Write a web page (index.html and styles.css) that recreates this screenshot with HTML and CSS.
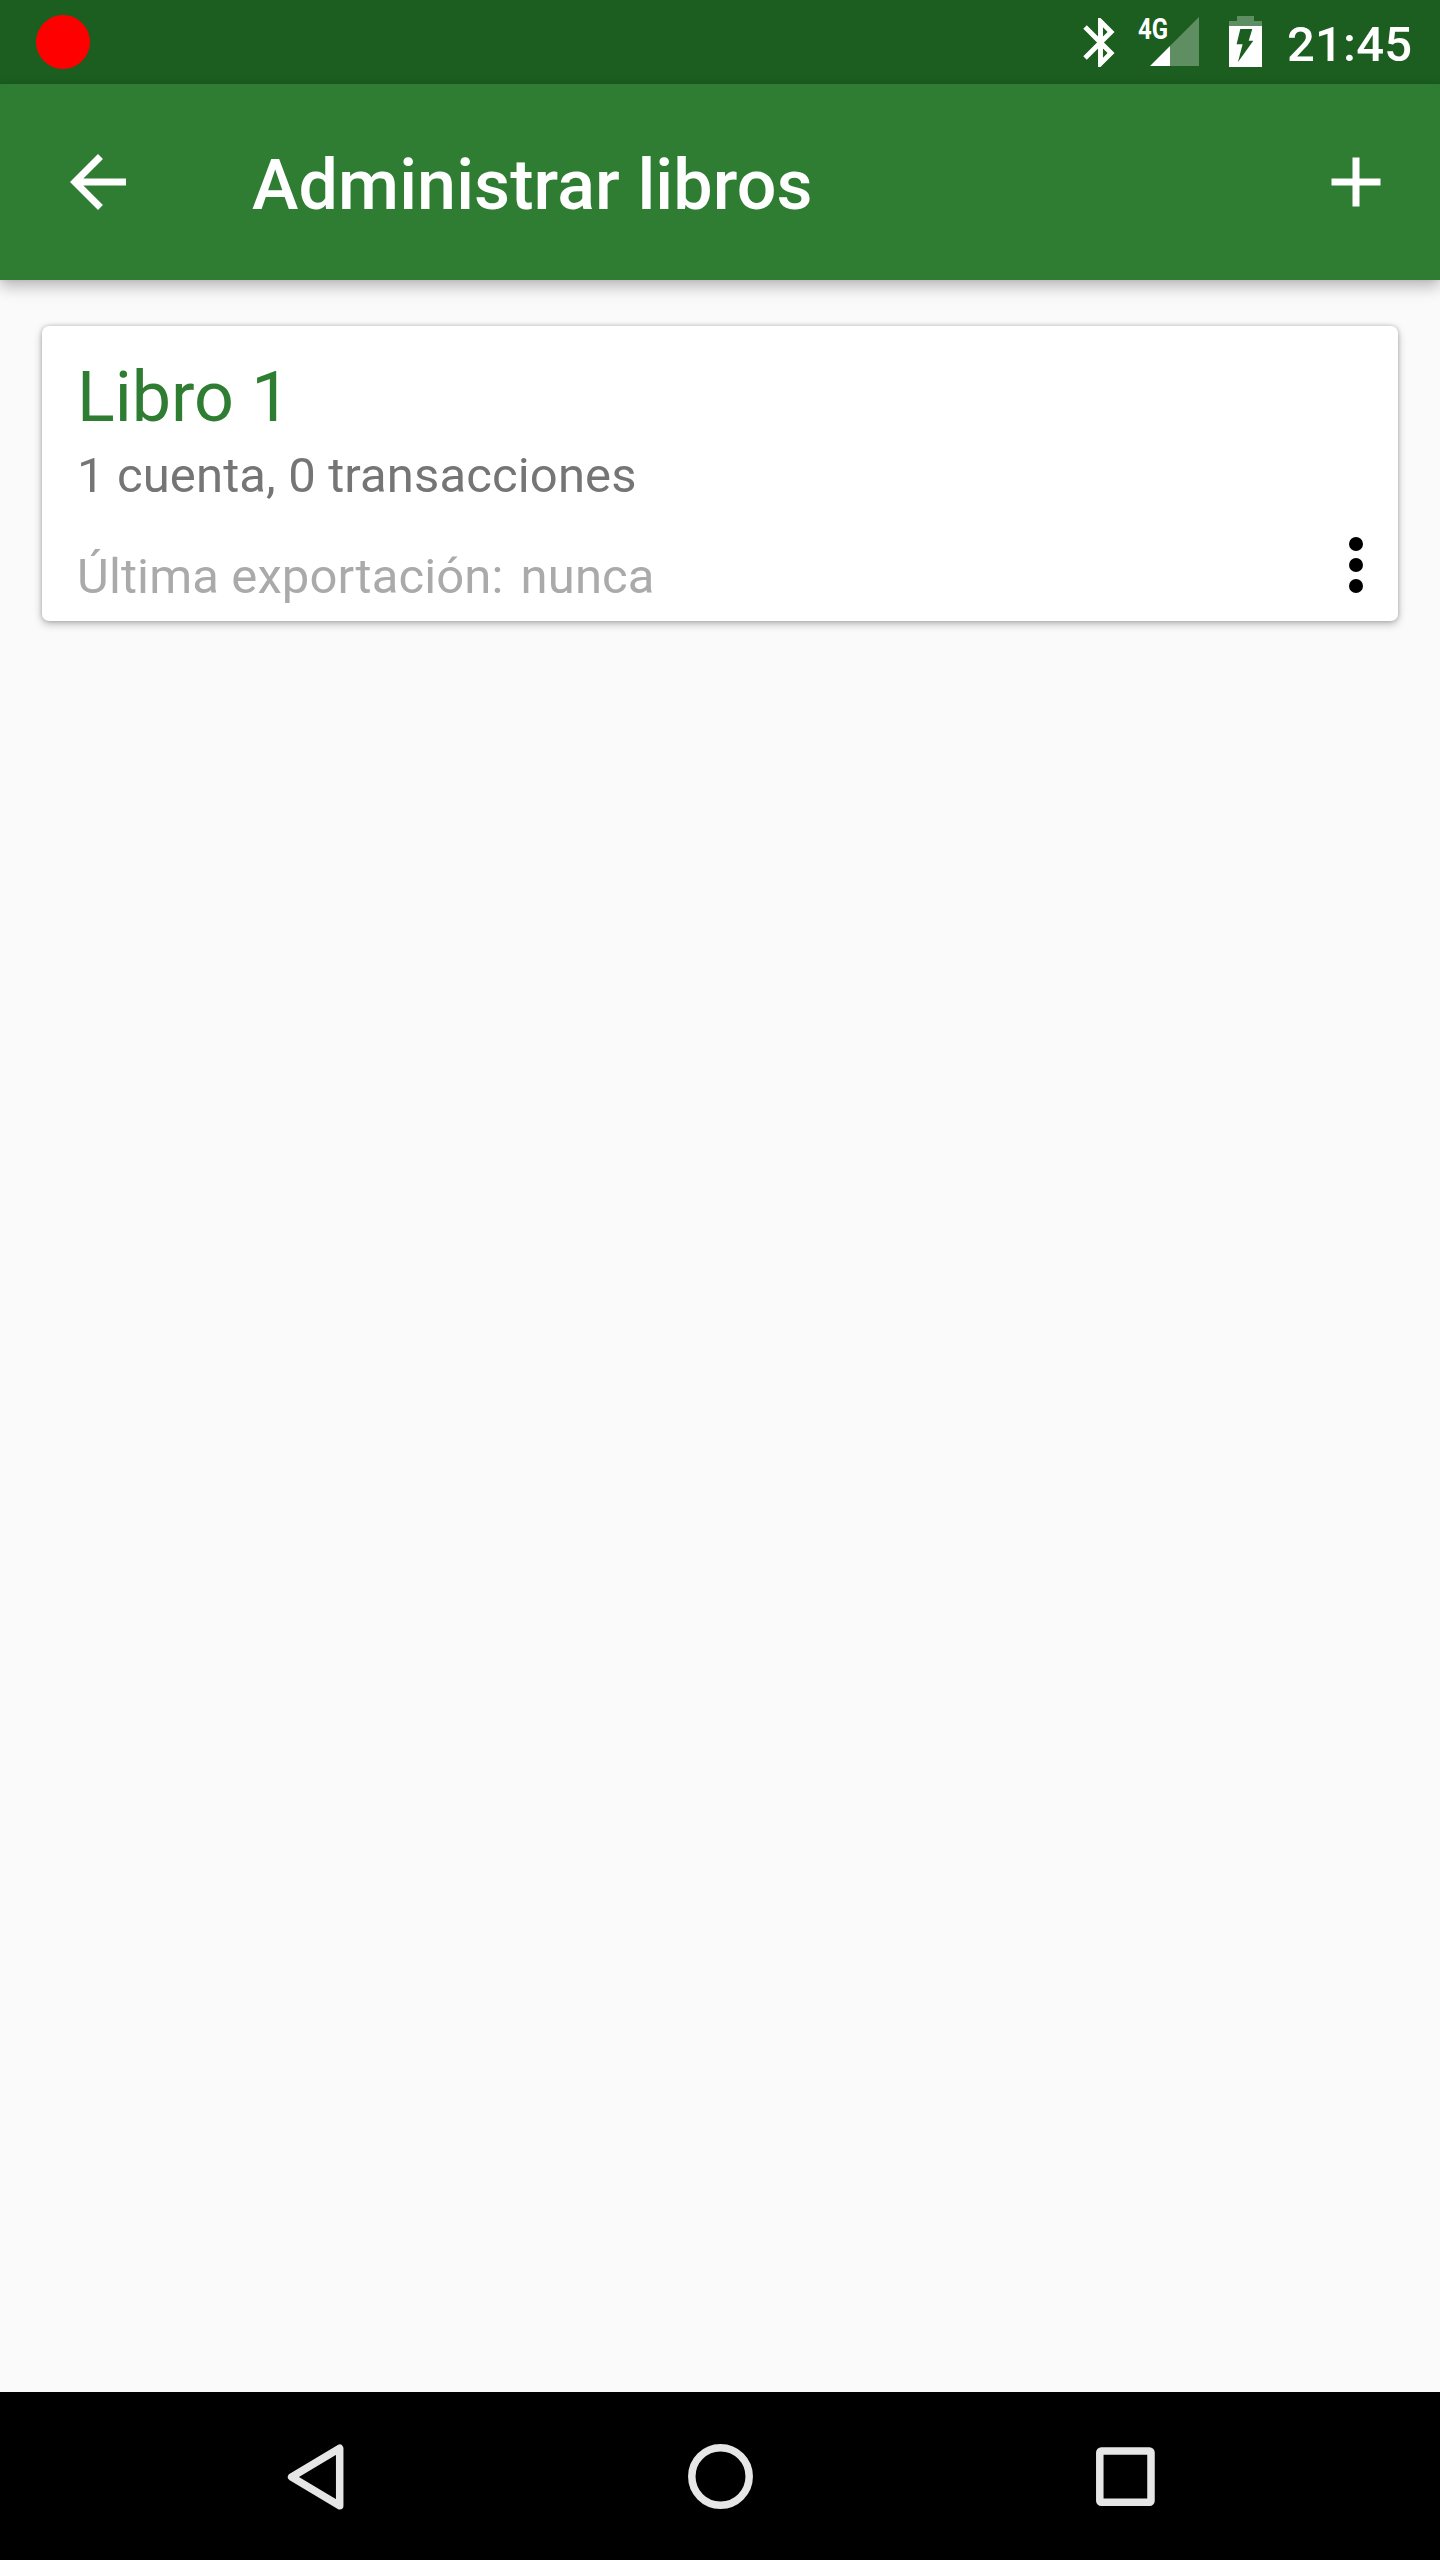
FILE: index.html
```html
<!DOCTYPE html>
<html lang="es">
<head>
<meta charset="utf-8">
<title>Administrar libros</title>
<link rel="stylesheet" href="styles.css">
</head>
<body>
<div class="screen">
  <div class="status-bar">
    <span class="record-dot"></span>
    <div class="status-icons">
      <svg class="bluetooth" viewBox="0 0 24 24"><path d="M17.71 7.71L12 2h-1v7.59L6.41 5 5 6.41 10.59 12 5 17.59 6.41 19 11 14.41V22h1l5.71-5.71-4.3-4.29 4.3-4.29zM13 5.83l1.88 1.88L13 9.59V5.83zm1.88 10.46L13 18.17v-3.76l1.88 1.88z"/></svg>
      <svg class="signal" viewBox="0 0 62 84">
        <path class="faint" d="M61 17v49H32V46z"/>
        <path d="M12 66L32 46v20z"/>
        <text x="0" y="39" textLength="30" lengthAdjust="spacingAndGlyphs">4G</text>
      </svg>
      <svg class="battery" viewBox="0 0 33 84">
        <path class="faint" d="M8 16h17v5h8v5H0v-5h8z"/>
        <path fill-rule="evenodd" d="M0 26h33v41H0zM11.3 29l-3.7 15.3h6L9 62l15.3-21.3h-4.6L23.3 29z"/>
      </svg>
    </div>
    <span class="clock">21:45</span>
  </div>

  <header class="app-bar">
    <svg class="icon" viewBox="0 0 24 24"><path d="M20 11H7.83l5.59-5.59L12 4l-8 8 8 8 1.41-1.41L7.83 13H20v-2z"/></svg>
    <h1 class="title">Administrar libros</h1>
    <svg class="icon" viewBox="0 0 24 24"><path d="M19 13h-6v6h-2v-6H5v-2h6V5h2v6h6v2z"/></svg>
  </header>

  <main class="content">
    <article class="card">
      <div class="card-text">
        <h2 class="book-name">Libro 1</h2>
        <p class="summary">1 cuenta, 0 transacciones</p>
        <p class="export"><span>Última exportación:</span><span>nunca</span></p>
      </div>
      <svg class="icon more" viewBox="0 0 24 24"><circle cx="12" cy="6" r="2"/><circle cx="12" cy="12" r="2"/><circle cx="12" cy="18" r="2"/></svg>
    </article>
  </main>

  <nav class="nav-bar">
    <svg class="nav-icon" viewBox="0 0 84 84"><path d="M18.6 43L66.7 14.3v57.4z"/></svg>
    <svg class="nav-icon" viewBox="0 0 84 84"><circle cx="42.5" cy="42.5" r="28.7"/></svg>
    <svg class="nav-icon" viewBox="0 0 84 84"><rect x="16.8" y="17" width="51.2" height="51.2" rx="1.5"/></svg>
  </nav>
</div>
</body>
</html>
```
FILE: styles.css
```css
* {
  box-sizing: border-box;
  margin: 0;
  padding: 0;
}

body {
  font-family: Roboto, "Liberation Sans", sans-serif;
  background: #fafafa;
}

svg {
  display: block;
  flex: none;
}

.screen {
  display: flex;
  flex-direction: column;
  width: 1440px;
  height: 2560px;
  overflow: hidden;
}

.status-bar {
  display: flex;
  align-items: center;
  height: 84px;
  padding: 0 28px 0 36px;
  background: #1b5e20;
  color: #fff;
}

.record-dot {
  width: 54px;
  height: 54px;
  border-radius: 50%;
  background: #f00;
}

.status-icons {
  display: flex;
  align-items: center;
  margin-left: auto;
  fill: #fff;
}

.bluetooth {
  width: 59px;
  height: 59px;
  margin-right: 8px;
}

.signal {
  width: 62px;
  height: 84px;
  margin-right: 29px;
}

.signal text {
  font-size: 29px;
  font-weight: 700;
}

.battery {
  width: 33px;
  height: 84px;
}

.faint {
  fill-opacity: 0.3;
}

.clock {
  width: 125px;
  margin-left: 25px;
  padding-top: 5px;
  font-size: 49px;
  font-weight: 500;
  line-height: 57px;
  letter-spacing: 0.2px;
}

.app-bar {
  position: relative;
  display: flex;
  align-items: center;
  height: 196px;
  padding: 0 42px 0 56px;
  background: #2e7d32;
  color: #fff;
  box-shadow: 0 7px 14px rgba(0, 0, 0, 0.25), 0 0 4px rgba(0, 0, 0, 0.1);
}

.icon {
  width: 84px;
  height: 84px;
  fill: currentColor;
}

.title {
  flex: 1;
  margin-left: 112px;
  padding-top: 6px;
  font-size: 70px;
  font-weight: 500;
  line-height: 82px;
  letter-spacing: 0.1px;
}

.content {
  flex: 1;
  padding: 46px 42px;
}

.card {
  display: flex;
  align-items: flex-end;
  height: 295px;
  padding: 30px 0 14px 35px;
  border-radius: 7px;
  background: #fff;
  box-shadow: 0 3px 8px rgba(0, 0, 0, 0.26), 0 0 4px rgba(0, 0, 0, 0.2);
}

.card-text {
  flex: 1;
  align-self: flex-start;
}

.book-name {
  font-size: 70px;
  font-weight: 400;
  line-height: 82px;
  color: #2e7d32;
}

.summary,
.export {
  font-size: 49px;
  line-height: 57px;
  letter-spacing: 0.13px;
}

.summary {
  margin-top: 9px;
  color: #757575;
}

.export {
  display: flex;
  gap: 17px;
  margin-top: 44px;
  color: #aaa;
}

.more {
  color: #000;
}

.nav-bar {
  display: flex;
  justify-content: center;
  align-items: center;
  gap: 321px;
  height: 168px;
  background: #000;
}

.nav-icon {
  width: 84px;
  height: 84px;
  fill: none;
  stroke: #e6e6e6;
  stroke-width: 7.5;
  stroke-linejoin: round;
}
```
